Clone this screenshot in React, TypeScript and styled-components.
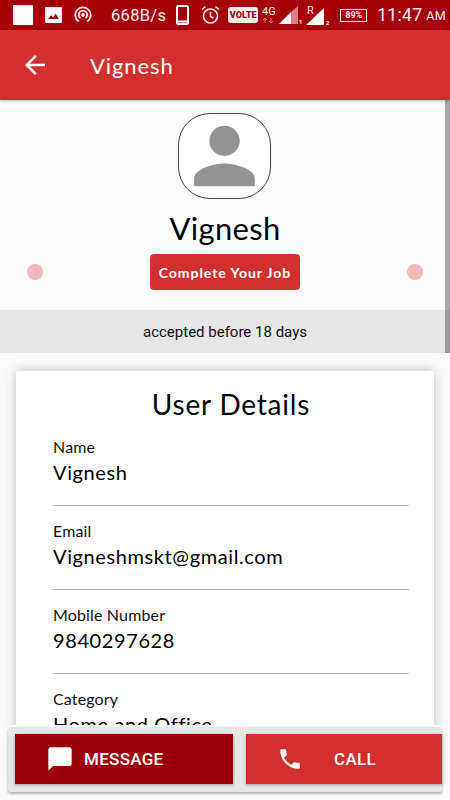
import React from 'react'
import styled, { createGlobalStyle } from 'styled-components'
import { MdArrowBack, MdChatBubble, MdPhone, MdPerson } from 'react-icons/md'

const GlobalStyle = createGlobalStyle`
  html, body {
    margin: 0;
    padding: 0;
    background: #fafafa;
    font-family: 'Lato', 'Open Sans', sans-serif;
  }
`

const Screen = styled.div`
  position: relative;
  width: 450px;
  height: 800px;
  overflow: hidden;
  background: #fafafa;
`

const StatusBar = styled.div`
  height: 30px;
  background: #a50008;
  display: flex;
  align-items: center;
  padding-left: 13px;
  color: #fbeeee;
  box-sizing: border-box;
`

const StatusText = styled.span<{ size: number; left: number }>`
  font-family: 'Roboto', sans-serif;
  font-size: ${props => props.size}px;
  margin-left: ${props => props.left}px;
  letter-spacing: 0.3px;
  white-space: nowrap;
`

const StatusIcon = styled.svg<{ left: number }>`
  display: block;
  flex: none;
  margin-left: ${props => props.left}px;
`

const VolteBadge = styled.span`
  margin-left: 8px;
  width: 30px;
  height: 16px;
  border-radius: 3px;
  background: #fbeeee;
  color: #a50008;
  font-family: 'Roboto', sans-serif;
  font-size: 9px;
  font-weight: 900;
  line-height: 16px;
  text-align: center;
  flex: none;
`

const BatteryBox = styled.span`
  margin-left: 9px;
  width: 25px;
  height: 11px;
  border: 1px solid #fbeeee;
  font-family: 'Roboto', sans-serif;
  font-size: 9px;
  font-weight: 700;
  line-height: 11px;
  text-align: center;
  flex: none;
`

const AppBar = styled.header`
  height: 70px;
  background: #d32f2f;
  display: flex;
  align-items: center;
  padding-left: 20px;
  color: #fff;
  box-shadow: 0 1px 3px rgba(0, 0, 0, 0.25);
  box-sizing: border-box;
`

const AppBarTitle = styled.h1`
  margin: 0 0 0 40px;
  font-size: 22px;
  font-weight: 400;
  letter-spacing: 0.9px;
`

const Profile = styled.section`
  display: flex;
  flex-direction: column;
  align-items: center;
  padding-top: 13px;
  height: 210px;
  box-sizing: border-box;
`

const Avatar = styled.div`
  width: 93px;
  height: 86px;
  margin-left: -1px;
  box-sizing: border-box;
  border: 1px solid #5b3a3c;
  border-radius: 32px;
  background: #fff;
  display: flex;
  align-items: center;
  justify-content: center;
  color: #949293;
`

const Name = styled.div`
  margin-top: 10px;
  font-size: 31px;
  line-height: 38px;
  color: #000;
  letter-spacing: 0.3px;
`

const ActionRow = styled.div`
  margin-top: 7px;
  width: 100%;
  padding: 0 27px 0 27px;
  box-sizing: border-box;
  display: flex;
  align-items: center;
  justify-content: space-between;
`

const Dot = styled.span`
  width: 16px;
  height: 16px;
  border-radius: 50%;
  background: #f2b8bb;
`

const CompleteButton = styled.button`
  width: 150px;
  height: 36px;
  padding: 0;
  border: none;
  border-radius: 4px;
  background: #d32f2f;
  color: #fff;
  font-family: inherit;
  font-size: 14px;
  font-weight: 700;
  letter-spacing: 0.95px;
`

const AcceptedBand = styled.div`
  height: 43px;
  padding-top: 1px;
  background: #e6e6e6;
  display: flex;
  align-items: center;
  justify-content: center;
  font-family: 'Roboto', sans-serif;
  font-size: 15px;
  color: #111;
  box-sizing: border-box;
`

const ScrollThumb = styled.div`
  position: absolute;
  top: 100px;
  right: 0;
  width: 5px;
  height: 253px;
  background: rgba(0, 0, 0, 0.33);
`

const Card = styled.section`
  margin: 18px 16px 0;
  padding: 15px 25px 0 37px;
  background: #fff;
  border-radius: 2px;
  box-shadow: 0 0 12px rgba(0, 0, 0, 0.25);
`

const CardTitle = styled.h2`
  margin: 0;
  text-align: center;
  font-size: 28px;
  line-height: 36px;
  font-weight: 400;
  color: #000;
  letter-spacing: 0.8px;
`

const Field = styled.div`
  height: 84px;
  padding-top: 15px;
  box-sizing: border-box;
  border-bottom: 1px solid #b0b0b0;
  &:last-child {
    border-bottom: none;
  }
`

const FieldLabel = styled.div`
  font-size: 16px;
  line-height: 20px;
  color: #111;
  letter-spacing: 0.15px;
`

const FieldValue = styled.div`
  margin-top: 2px;
  font-size: 20px;
  line-height: 26px;
  color: #000;
  letter-spacing: 0.6px;
`

const BottomBar = styled.div`
  position: absolute;
  left: 0;
  right: 0;
  bottom: 0;
  height: 75px;
  background: #fafafa;
  padding: 2px 8px 0;
  box-sizing: border-box;
`

const BottomInner = styled.div`
  height: 65px;
  padding: 7px 0 0 7px;
  box-sizing: border-box;
  background: #e6e6e6;
  border-radius: 3px;
  box-shadow: 0 2px 3px rgba(0, 0, 0, 0.3);
  display: flex;
  gap: 13px;
`

const BarButton = styled.button<{ primary?: boolean; wide?: boolean; iconGap: number }>`
  width: ${props => (props.wide ? 218 : 196)}px;
  height: 50px;
  border: none;
  padding: 0 0 0 31px;
  background: ${props => (props.primary ? '#9b0008' : '#d32f2f')};
  color: #fff;
  box-shadow: 0 1px 3px rgba(0, 0, 0, 0.3);
  display: flex;
  align-items: center;
  gap: ${props => props.iconGap}px;
  font-family: 'Roboto', sans-serif;
  font-size: 17px;
  font-weight: 500;
  letter-spacing: 0.3px;
`

const fields = [
  { label: 'Name', value: 'Vignesh' },
  { label: 'Email', value: 'Vigneshmskt@gmail.com' },
  { label: 'Mobile Number', value: '9840297628' },
  { label: 'Category', value: 'Home and Office' },
]

const StatusIcons: React.FC = () => (
  <StatusBar>
    <StatusIcon left={0} width="20" height="20" viewBox="0 0 20 20">
      <rect width="20" height="20" fill="#fff" rx="1" />
    </StatusIcon>
    <StatusIcon left={12} width="17" height="16" viewBox="0 0 17 16">
      <path fill="#fff" d="M1 0h15a1 1 0 0 1 1 1v14a1 1 0 0 1-1 1H1a1 1 0 0 1-1-1V1a1 1 0 0 1 1-1z" />
      <path fill="#a50008" d="M3 12l3-4 2 2.5 2.5-4L14 12z" />
    </StatusIcon>
    <StatusIcon left={12} width="18" height="18" viewBox="0 0 18 18" fill="none" stroke="#fbeeee" strokeWidth="1.8">
      <path d="M4.8 15.5a7.7 7.7 0 1 1 8.4 0" />
      <path d="M6.5 12.2a4.2 4.2 0 1 1 5 0" />
      <circle cx="9" cy="9" r="1" fill="#fbeeee" />
    </StatusIcon>
    <StatusText size={16.5} left={19}>668B/s</StatusText>
    <StatusIcon left={10} width="13" height="20" viewBox="0 0 13 20" fill="none" stroke="#fff" strokeWidth="2">
      <rect x="1" y="1" width="11" height="18" rx="1.5" />
      <path d="M1 16.5h11" />
    </StatusIcon>
    <StatusIcon left={12} width="19" height="20" viewBox="0 0 19 20" fill="none" stroke="#fbeeee" strokeWidth="1.6">
      <circle cx="9.5" cy="11" r="7" />
      <path d="M9.5 7v4.5l3 1.5M1 4.5L4.5 1.5M18 4.5L14.5 1.5" />
    </StatusIcon>
    <VolteBadge>VOLTE</VolteBadge>
    <StatusIcon left={4} width="13" height="20" viewBox="0 0 13 20">
      <text x="0" y="10" fontFamily="Roboto, sans-serif" fontSize="11" fill="#fbeeee">4G</text>
      <path fill="none" stroke="#d9808a" strokeWidth="1" d="M3 18v-5M1 15l2-2 2 2M9 13v5M7 16l2 2 2-2" />
    </StatusIcon>
    <StatusIcon left={4} width="24" height="18" viewBox="0 0 24 18">
      <path fill="#fff" d="M0 18L12 6v12z" />
      <path fill="#d9808a" d="M12 6l7-6v18h-7z" />
      <text x="20" y="18" fontFamily="Roboto, sans-serif" fontSize="6" fontWeight="700" fill="#fff">1</text>
    </StatusIcon>
    <StatusIcon left={3} width="25" height="20" viewBox="0 0 25 20">
      <text x="1" y="9" fontFamily="Roboto, sans-serif" fontSize="11" fill="#fbeeee">R</text>
      <path fill="#fff" d="M0 20L18 3v17z" />
      <text x="20" y="20" fontFamily="Roboto, sans-serif" fontSize="6" fontWeight="700" fill="#fff">2</text>
    </StatusIcon>
    <BatteryBox>89%</BatteryBox>
    <StatusText size={17.5} left={10}>11:47</StatusText>
    <StatusText size={12.5} left={4}>AM</StatusText>
  </StatusBar>
)

export default function App() {
  return (
    <Screen>
      <GlobalStyle />
      <StatusIcons />
      <AppBar>
        <MdArrowBack size={30} />
        <AppBarTitle>Vignesh</AppBarTitle>
      </AppBar>
      <Profile>
        <Avatar>
          <MdPerson size={100} />
        </Avatar>
        <Name>Vignesh</Name>
        <ActionRow>
          <Dot />
          <CompleteButton>Complete Your Job</CompleteButton>
          <Dot />
        </ActionRow>
      </Profile>
      <AcceptedBand>accepted before 18 days</AcceptedBand>
      <ScrollThumb />
      <Card>
        <CardTitle>User Details</CardTitle>
        {fields.map(field => (
          <Field key={field.label}>
            <FieldLabel>{field.label}</FieldLabel>
            <FieldValue>{field.value}</FieldValue>
          </Field>
        ))}
      </Card>
      <BottomBar>
        <BottomInner>
          <BarButton primary wide iconGap={10}>
            <MdChatBubble size={28} />
            MESSAGE
          </BarButton>
          <BarButton iconGap={31}>
            <MdPhone size={26} />
            CALL
          </BarButton>
        </BottomInner>
      </BottomBar>
    </Screen>
  )
}
